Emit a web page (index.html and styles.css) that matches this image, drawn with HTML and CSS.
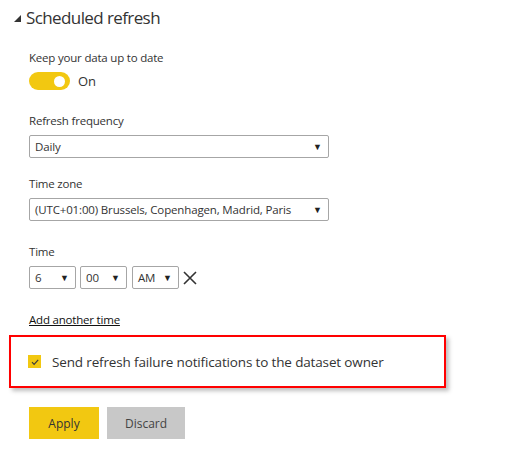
FILE: index.html
```html
<!DOCTYPE html>
<html>
<head>
<meta charset="utf-8">
<link rel="stylesheet" href="styles.css">
</head>
<body>
<div class="panel">
  <div class="section-head">
    <svg class="tri" width="7" height="7" viewBox="0 0 7 7"><polygon points="7,0 7,7 0,7" fill="#333"/></svg>
    <span class="title">Scheduled refresh</span>
  </div>
  <div class="body">
    <div class="label label-first">Keep your data up to date</div>
    <div class="toggle-row">
      <div class="toggle"><div class="knob"></div></div>
      <span class="toggle-text">On</span>
    </div>

    <div class="label label-freq">Refresh frequency</div>
    <div class="select wide"><span>Daily</span><span class="arrow">▼</span></div>

    <div class="label label-zone">Time zone</div>
    <div class="select wide"><span>(UTC+01:00) Brussels, Copenhagen, Madrid, Paris</span><span class="arrow">▼</span></div>

    <div class="label label-time">Time</div>
    <div class="time-row">
      <div class="select small"><span>6</span><span class="arrow">▼</span></div>
      <div class="select small"><span>00</span><span class="arrow">▼</span></div>
      <div class="select small"><span>AM</span><span class="arrow">▼</span></div>
      <svg class="close" width="14" height="14" viewBox="0 0 14 14"><path d="M1 1 L13 13 M13 1 L1 13" stroke="#333" stroke-width="1.6" fill="none"/></svg>
    </div>

    <a class="add-link" href="#">Add another time</a>
  </div>

  <div class="highlight">
    <span class="checkbox">
      <svg width="12" height="12" viewBox="0 0 12 12"><path d="M3 6.2 L5.1 8.3 L9.2 3.8" stroke="#3b3b3b" stroke-width="1.2" fill="none"/></svg>
    </span>
    <span class="check-text">Send refresh failure notifications to the dataset owner</span>
  </div>

  <div class="buttons">
    <button class="btn apply">Apply</button>
    <button class="btn discard">Discard</button>
  </div>
</div>
</body>
</html>
```

FILE: styles.css
```css
* { box-sizing: border-box; }
html, body { margin: 0; padding: 0; background: #fff; }
body {
  font-family: "Open Sans", "Noto Sans", sans-serif;
  color: #333;
  width: 516px;
  height: 465px;
  overflow: hidden;
}
.panel { padding-top: 4px; }
.section-head {
  display: flex;
  align-items: center;
  padding-left: 14px;
  height: 26px;
}
.tri { margin-right: 5px; margin-top: 3px; }
.title {
  font-size: 17px;
  color: #333;
  letter-spacing: -0.6px;
}
.body { padding-left: 29px; }
.label {
  font-size: 11.5px;
  line-height: 16px;
  color: #333;
  margin-top: 17px;
  margin-bottom: 6px;
  letter-spacing: -0.2px;
}
.label-first { margin-top: 20px; margin-bottom: 6px; }
.label-freq { margin-top: 23px; }
.label-zone { margin-top: 18px; }
.label-time { margin-top: 23px; }
.toggle-row {
  display: flex;
  align-items: center;
  height: 18px;
}
.toggle {
  width: 41px;
  height: 18px;
  border-radius: 9px;
  background: #f2c811;
  position: relative;
}
.knob {
  position: absolute;
  width: 11px;
  height: 11px;
  border-radius: 50%;
  background: #fff;
  right: 5px;
  top: 3.5px;
}
.toggle-text { margin-left: 8px; font-size: 13px; color: #333; }
.select {
  display: flex;
  align-items: center;
  justify-content: space-between;
  height: 23px;
  border: 1px solid #a6a6a6;
  border-radius: 2px;
  padding: 0 6px 0 5px;
  font-size: 11.5px;
  letter-spacing: -0.15px;
  color: #333;
}
.select.wide { width: 300px; }
.arrow { font-size: 9px; color: #222; letter-spacing: 0; }
.time-row {
  display: flex;
  align-items: center;
  gap: 4px;
}
.select.small { width: 47px; }
.time-row .select:nth-child(2) { margin-right: 1px; }
.close { margin-left: 0; }
.add-link {
  display: inline-block;
  margin-top: 23px;
  font-size: 11.5px;
  letter-spacing: -0.2px;
  color: #111;
  text-decoration: underline;
}
.highlight {
  margin: 6px 0 0 9px;
  width: 437px;
  height: 53px;
  border: 2.5px solid #ff0000;
  box-shadow: 3px 3px 4px rgba(0,0,0,0.25);
  display: flex;
  align-items: center;
  padding-left: 17px;
}
.checkbox {
  width: 13px;
  height: 13px;
  background: #f2c811;
  display: flex;
  align-items: center;
  justify-content: center;
}
.check-text {
  margin-left: 11px;
  font-size: 13.5px;
  letter-spacing: -0.15px;
  color: #333;
}
.buttons {
  display: flex;
  gap: 8px;
  padding-left: 29px;
  margin-top: 19px;
}
.btn {
  border: none;
  height: 32px;
  font-family: inherit;
  font-size: 12px;
  color: #333;
  padding: 0;
}
.apply { width: 70px; background: #f2c811; }
.discard { width: 78px; background: #c8c8c8; color: #444; }
```
